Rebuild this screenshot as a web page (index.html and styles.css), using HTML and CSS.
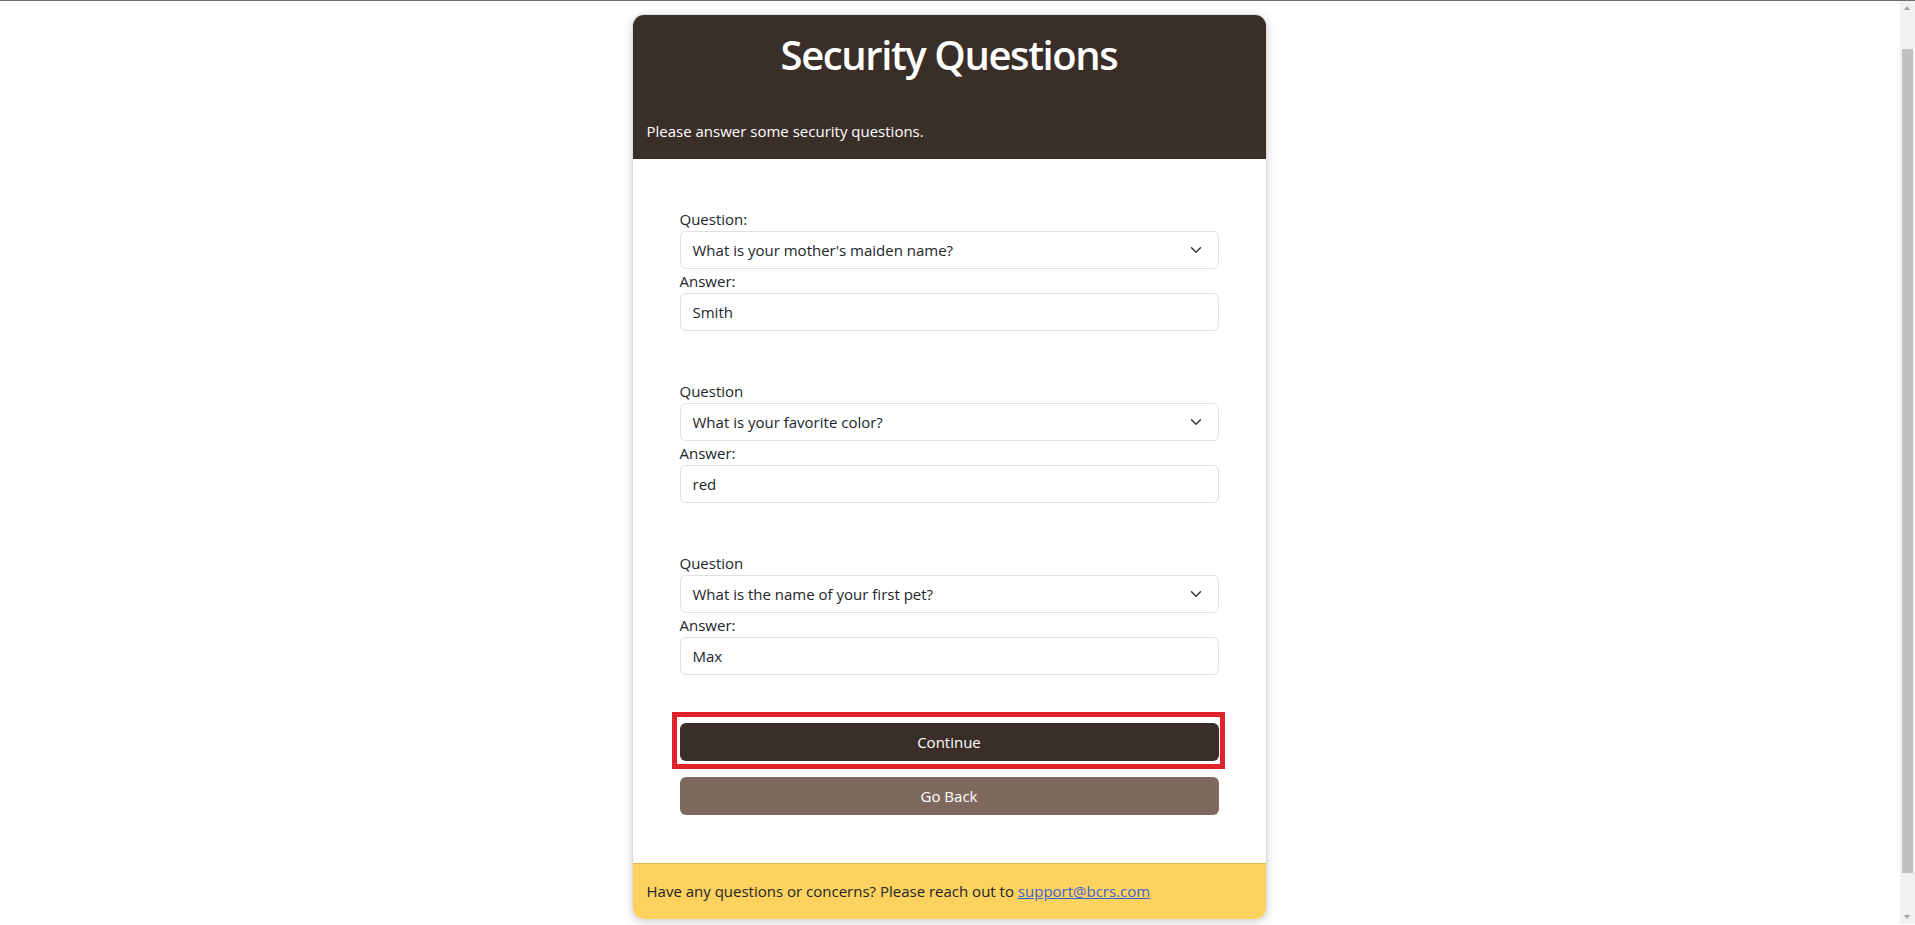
FILE: index.html
```html
<!DOCTYPE html>
<html lang="en">
<head>
<meta charset="utf-8">
<title>Security Questions</title>
<link rel="stylesheet" href="styles.css">
</head>
<body>
<div class="topline"></div>
<main class="page">
  <div class="card">
    <div class="card-header">
      <h1 class="title">Security Questions</h1>
      <p class="subtitle">Please answer some security questions.</p>
    </div>
    <form class="card-body">
      <div class="group">
        <label class="label">Question:</label>
        <div class="select"><span>What is your mother's maiden name?</span>
          <svg class="chev" viewBox="0 0 16 16" width="16" height="12"><path d="m2 5 6 6 6-6" fill="none" stroke="#343a40" stroke-width="2" stroke-linecap="round" stroke-linejoin="round"/></svg>
        </div>
        <label class="label">Answer:</label>
        <div class="input">Smith</div>
      </div>
      <div class="group">
        <label class="label">Question</label>
        <div class="select"><span>What is your favorite color?</span>
          <svg class="chev" viewBox="0 0 16 16" width="16" height="12"><path d="m2 5 6 6 6-6" fill="none" stroke="#343a40" stroke-width="2" stroke-linecap="round" stroke-linejoin="round"/></svg>
        </div>
        <label class="label">Answer:</label>
        <div class="input">red</div>
      </div>
      <div class="group">
        <label class="label">Question</label>
        <div class="select"><span>What is the name of your first pet?</span>
          <svg class="chev" viewBox="0 0 16 16" width="16" height="12"><path d="m2 5 6 6 6-6" fill="none" stroke="#343a40" stroke-width="2" stroke-linecap="round" stroke-linejoin="round"/></svg>
        </div>
        <label class="label">Answer:</label>
        <div class="input">Max</div>
      </div>
      <div class="actions">
        <div class="highlight"><button type="button" class="btn btn-dark">Continue</button></div>
        <button type="button" class="btn btn-light">Go Back</button>
      </div>
    </form>
    <div class="card-footer">Have any questions or concerns? Please reach out to <a href="#" class="link">support@bcrs.com</a></div>
  </div>
</main>
<div class="scrollbar" aria-hidden="true">
  <div class="sb-arrow sb-up"></div>
  <div class="sb-track"><div class="sb-thumb"></div></div>
  <div class="sb-arrow sb-down"></div>
</div>
</body>
</html>
```

FILE: styles.css
```css
html, body {
  margin: 0;
  padding: 0;
}
body {
  font-family: "Open Sans", "Noto Sans", sans-serif;
  font-size: 16px;
  line-height: 24px;
  color: #212529;
  background: #fff;
  padding-right: 17px;
}
.topline {
  height: 1px;
  background: #6e6e6e;
  margin-right: -17px;
}
.page {
  display: flex;
  justify-content: center;
  padding: 13px 0 36px;
}
.card {
  width: 635px;
  box-sizing: border-box;
  border: 1px solid #dcdcdc;
  border-radius: 12px;
  overflow: hidden;
  box-shadow: 0 2px 10px rgba(0,0,0,0.18);
  background: #fff;
}
.card-header {
  background: #3a2e29;
  color: #fff;
  padding: 16px 14px 16px;
}
.title {
  margin: 0 0 40px;
  font-size: 40px;
  line-height: 48px;
  font-weight: 600;
  text-align: center;
  letter-spacing: -1.4px;
}
.subtitle {
  margin: 0;
  font-size: 15px;
  line-height: 24px;
}
.card-body {
  padding: 48px 47px 48px 47px;
  display: flex;
  flex-direction: column;
  gap: 48px;
}
.group {
  display: flex;
  flex-direction: column;
}
.label {
  font-size: 15px;
  line-height: 24px;
  color: #212529;
}
.select, .input {
  height: 38px;
  box-sizing: border-box;
  border: 1px solid #dee2e6;
  border-radius: 6px;
  padding: 0 12px;
  display: flex;
  align-items: center;
  font-size: 15px;
  color: #212529;
}
.select {
  justify-content: space-between;
}
.chev {
  margin-right: 2px;
}
.actions {
  display: flex;
  flex-direction: column;
  gap: 16px;
}
.highlight {
  position: relative;
}
.highlight::after {
  content: "";
  position: absolute;
  left: -8px;
  right: -6px;
  top: -11px;
  bottom: -8px;
  border: 5px solid #e0232b;
  pointer-events: none;
}
.btn {
  display: block;
  width: 100%;
  height: 38px;
  border: none;
  border-radius: 6px;
  color: #fff;
  font-family: inherit;
  font-size: 15px;
  cursor: pointer;
}
.btn-dark {
  background: #3a2e29;
}
.btn-light {
  background: #7d695e;
}
.card-footer {
  background: #fed25f;
  border-top: 1px solid #e0b54a;
  padding: 15px 14px 16px;
  font-size: 15px;
  line-height: 24px;
  color: #212529;
}
.link {
  color: #3c64d4;
  text-decoration: underline;
}
.scrollbar {
  position: fixed;
  top: 1px;
  right: 0;
  bottom: 1px;
  width: 15px;
  background: #f1f1f1;
  display: flex;
  flex-direction: column;
}
.sb-arrow {
  height: 17px;
  position: relative;
}
.sb-arrow::before {
  content: "";
  position: absolute;
  left: 4px;
  border-left: 3.5px solid transparent;
  border-right: 3.5px solid transparent;
}
.sb-up::before {
  top: 5px;
  border-bottom: 4px solid #a3a3a3;
}
.sb-down::before {
  bottom: 5px;
  border-top: 4px solid #a3a3a3;
}
.sb-track {
  flex: 1;
  padding: 31px 2px 34px;
  display: flex;
}
.sb-thumb {
  flex: 1;
  background: #c1c1c1;
}
```
